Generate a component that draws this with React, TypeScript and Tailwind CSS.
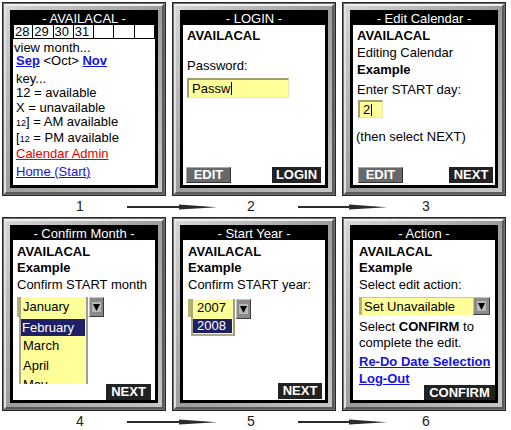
import type { ReactNode } from "react";

const FONT = "font-['Liberation_Sans',Arial,Helvetica,sans-serif]";

function Phone({ title, children }: { title: string; children: ReactNode }) {
  return (
    <div className="w-[164px] h-[194px] border border-[#262626] bg-[#707070] p-[1px]">
      <div className="h-full border-2 border-t-[#efefef] border-l-[#e2e2e2] border-r-[#5a5a5a] border-b-[#5a5a5a] bg-gradient-to-br from-[#d6d6d6] via-[#9c9c9c] to-[#c8c8c8] p-[4px]">
        <div className="h-full border-[3px] border-black bg-white flex flex-col">
          <div className="h-[12px] bg-black text-white text-[13px] leading-[12px] text-center whitespace-nowrap">{title}</div>
          <div className="h-[160px] flex flex-col text-[13px] text-black overflow-hidden">{children}</div>
        </div>
      </div>
    </div>
  );
}

function Btn({ label, dark, w }: { label: string; dark?: boolean; w: string }) {
  return (
    <div
      className={
        dark
          ? `${w} h-[16px] bg-[#222] text-white font-bold text-[13px] leading-[16px] text-center`
          : `${w} h-[16px] bg-[#686868] border border-t-[#a8a8a8] border-l-[#a8a8a8] border-r-[#333] border-b-[#333] text-white font-bold text-[13px] leading-[14px] text-center`
      }
    >
      {label}
    </div>
  );
}

function DropBtn({ w, h }: { w: string; h: string }) {
  return (
    <div className={`${w} ${h} shrink-0 bg-[#8a8a8a] border border-t-[#c4c4c4] border-l-[#c4c4c4] border-r-[#3c3c3c] border-b-[#3c3c3c] flex items-center justify-center`}>
      <div className="bg-[#b8b8b8] px-[1px] py-[1px] flex items-center">
        <svg width="7" height="8" viewBox="0 0 7 8">
          <polygon points="0,1 7,1 3.5,8" fill="#000" />
        </svg>
      </div>
    </div>
  );
}

function Arrow({ w }: { w: number }) {
  return (
    <svg width={w} height="8" viewBox={`0 0 ${w} 8`} className="shrink-0">
      <rect x="0" y="3" width={w - 36} height="2" fill="#2b2b2b" />
      <polygon points={`${w - 38},1.5 ${w},4.2 ${w - 38},6.5`} fill="#2b2b2b" />
    </svg>
  );
}

function Caption({ a, b, c }: { a: string; b: string; c: string }) {
  return (
    <div className="h-[21px] flex items-center text-[14px] text-[#222]">
      <div className="w-[127px] shrink-0 pl-[76px]">{a}</div>
      <Arrow w={90} />
      <div className="w-[81px] shrink-0 pl-[30px]">{b}</div>
      <Arrow w={89} />
      <div className="flex-1 pl-[35px]">{c}</div>
    </div>
  );
}

const link = "text-[#1414e6] underline";

export default function App() {
  return (
    <div className={`w-[511px] h-[430px] bg-white overflow-hidden pt-[2px] ${FONT}`}>
      {/* row 1 */}
      <div className="flex gap-[6px] pl-[2px]">
        <Phone title="- AVAILACAL -">
          <div className="grid grid-cols-7 h-[14px] border-b border-black">
            {["28", "29", "30", "31", "", "", ""].map((d, i) => (
              <div key={i} className={`border-r border-black leading-[13px] pl-[1px] ${i === 0 ? "border-l" : ""}`}>{d}</div>
            ))}
          </div>
          <div className="pl-[1px] mt-[2px] h-[13px] leading-[13px]">view month...</div>
          <div className="pl-[3px] h-[14px] leading-[14px]">
            <span className={`${link} font-bold`}>Sep</span> &lt;Oct&gt; <span className={`${link} font-bold`}>Nov</span>
          </div>
          <div className="pl-[3px] mt-[4px] h-[14px] leading-[14px]">key...</div>
          <div className="pl-[3px] h-[14px] leading-[14px]">12 = available</div>
          <div className="pl-[3px] mt-[1px] h-[14px] leading-[14px]">X = unavailable</div>
          <div className="pl-[3px] h-[14px] leading-[14px]"><span className="text-[9px]">12</span>] = AM available</div>
          <div className="pl-[3px] mt-[2px] h-[14px] leading-[14px]">[<span className="text-[9px]">12</span> = PM available</div>
          <div className="pl-[3px] mt-[2px] h-[14px] leading-[14px]"><span className="text-[#e60000] underline">Calendar Admin</span></div>
          <div className="pl-[3px] mt-[4px] h-[14px] leading-[14px]"><span className={link}>Home (Start)</span></div>
        </Phone>

        <Phone title="- LOGIN -">
          <div className="pl-[4px] mt-[4px] h-[14px] leading-[14px] font-bold">AVAILACAL</div>
          <div className="pl-[4px] mt-[16px] h-[14px] leading-[14px]">Password:</div>
          <div className="ml-[4px] mt-[5px] w-[102px] h-[20px] bg-[#ffff99] border-t-2 border-l-2 border-t-[#a0a070] border-l-[#a0a070] border-b border-r border-b-[#e8e8b0] border-r-[#e8e8b0] pl-[3px] leading-[17px] flex items-center">
            Passw<span className="inline-block w-[1px] h-[13px] bg-black ml-[1px]" />
          </div>
          <div className="mt-auto mb-[2px] flex justify-between pl-[3px] pr-[4px]">
            <Btn label="EDIT" w="w-[45px]" />
            <Btn label="LOGIN" dark w="w-[49px]" />
          </div>
        </Phone>

        <Phone title="- Edit Calendar -">
          <div className="pl-[4px] mt-[4px] h-[14px] leading-[14px] font-bold">AVAILACAL</div>
          <div className="pl-[4px] mt-[3px] h-[14px] leading-[14px]">Editing Calendar</div>
          <div className="pl-[4px] mt-[3px] h-[14px] leading-[14px] font-bold">Example</div>
          <div className="pl-[4px] mt-[6px] h-[14px] leading-[14px]">Enter START day:</div>
          <div className="ml-[5px] mt-[3px] w-[25px] h-[18px] bg-[#ffff99] border-t-2 border-l-2 border-t-[#a0a070] border-l-[#a0a070] border-b border-r border-b-[#e8e8b0] border-r-[#e8e8b0] pl-[3px] flex items-center">
            2<span className="inline-block w-[1px] h-[12px] bg-black ml-[1px]" />
          </div>
          <div className="pl-[3px] mt-[12px] h-[14px] leading-[14px]">(then select NEXT)</div>
          <div className="mt-auto mb-[2px] flex justify-between pl-[5px] pr-[2px]">
            <Btn label="EDIT" w="w-[45px]" />
            <Btn label="NEXT" dark w="w-[44px]" />
          </div>
        </Phone>
      </div>
      <Caption a="1" b="2" c="3" />

      {/* row 2 */}
      <div className="flex gap-[6px] pl-[2px]">
        <Phone title="- Confirm Month -">
          <div className="pl-[4px] mt-[5px] h-[14px] leading-[14px] font-bold">AVAILACAL</div>
          <div className="pl-[4px] mt-[2px] h-[14px] leading-[14px] font-bold">Example</div>
          <div className="pl-[4px] mt-[3px] h-[14px] leading-[14px]">Confirm START month</div>
          <div className="ml-[4px] mt-[5px] flex items-start">
            <div className="w-[2px] h-[20px] bg-[#b4b46c]" />
            <div className="w-[69px] h-[87px] bg-[#ffff99] border-l-2 border-r-2 border-l-[#a8a888] border-r-[#9c9c9c] overflow-hidden">
              <div className="h-[19px] leading-[19px] pl-[2px]">January</div>
              <div className="mt-[3px] h-[17px] leading-[17px] bg-[#1f1f66] text-white pl-[1px] mr-[1px]">February</div>
              <div className="h-[20px] leading-[20px] pl-[2px]">March</div>
              <div className="h-[19px] leading-[19px] pl-[2px]">April</div>
              <div className="h-[19px] leading-[19px] pl-[2px]">May</div>
            </div>
            <div className="ml-[1px]">
              <DropBtn w="w-[15px]" h="h-[20px]" />
            </div>
          </div>
          <div className="mt-auto mb-[1px] flex justify-end pr-[4px] -mt-[14px]">
            <Btn label="NEXT" dark w="w-[45px]" />
          </div>
        </Phone>

        <Phone title="- Start Year -">
          <div className="pl-[5px] mt-[5px] h-[14px] leading-[14px] font-bold">AVAILACAL</div>
          <div className="pl-[5px] mt-[2px] h-[14px] leading-[14px] font-bold">Example</div>
          <div className="pl-[5px] mt-[3px] h-[14px] leading-[14px]">Confirm START year:</div>
          <div className="ml-[5px] mt-[7px] flex items-start">
            <div className="w-[3px] h-[18px] bg-[#b4b46c]" />
            <div className="w-[44px] bg-[#ffff99] border-l-2 border-r-2 border-b-2 border-l-[#a8a888] border-r-[#9c9c9c] border-b-[#a8a888]">
              <div className="h-[18px] leading-[18px] pl-[4px]">2007</div>
              <div className="mt-[2px] mb-[1px] h-[14px] leading-[14px] bg-[#1f1f66] text-white pl-[4px] mr-[1px]">2008</div>
            </div>
            <div className="ml-[1px]">
              <DropBtn w="w-[15px]" h="h-[20px]" />
            </div>
          </div>
          <div className="mt-auto mb-[1px] flex justify-end pr-[3px]">
            <Btn label="NEXT" dark w="w-[44px]" />
          </div>
        </Phone>

        <Phone title="- Action -">
          <div className="pl-[6px] mt-[5px] h-[14px] leading-[14px] font-bold">AVAILACAL</div>
          <div className="pl-[6px] mt-[2px] h-[14px] leading-[14px] font-bold">Example</div>
          <div className="pl-[6px] mt-[3px] h-[14px] leading-[14px]">Select edit action:</div>
          <div className="ml-[6px] mt-[5px] flex items-start">
            <div className="w-[114px] h-[18px] bg-[#ffff99] border-l-[3px] border-t border-l-[#b4b46c] border-t-[#c8c880] pl-[2px] leading-[17px] whitespace-nowrap">Set Unavailable</div>
            <DropBtn w="w-[17px]" h="h-[18px]" />
          </div>
          <div className="pl-[6px] mt-[5px] h-[14px] leading-[14px]">Select <b>CONFIRM</b> to</div>
          <div className="pl-[6px] mt-[2px] h-[14px] leading-[14px]">complete the edit.</div>
          <div className="pl-[6px] mt-[5px] h-[14px] leading-[14px] whitespace-nowrap"><span className={`${link} font-bold`}>Re-Do Date Selection</span></div>
          <div className="pl-[6px] mt-[3px] h-[13px] leading-[14px]"><span className={`${link} font-bold`}>Log-Out</span></div>
          <div className="mt-auto mb-[2px] flex justify-end">
            <Btn label="CONFIRM" dark w="w-[71px]" />
          </div>
        </Phone>
      </div>
      <Caption a="4" b="5" c="6" />
    </div>
  );
}
